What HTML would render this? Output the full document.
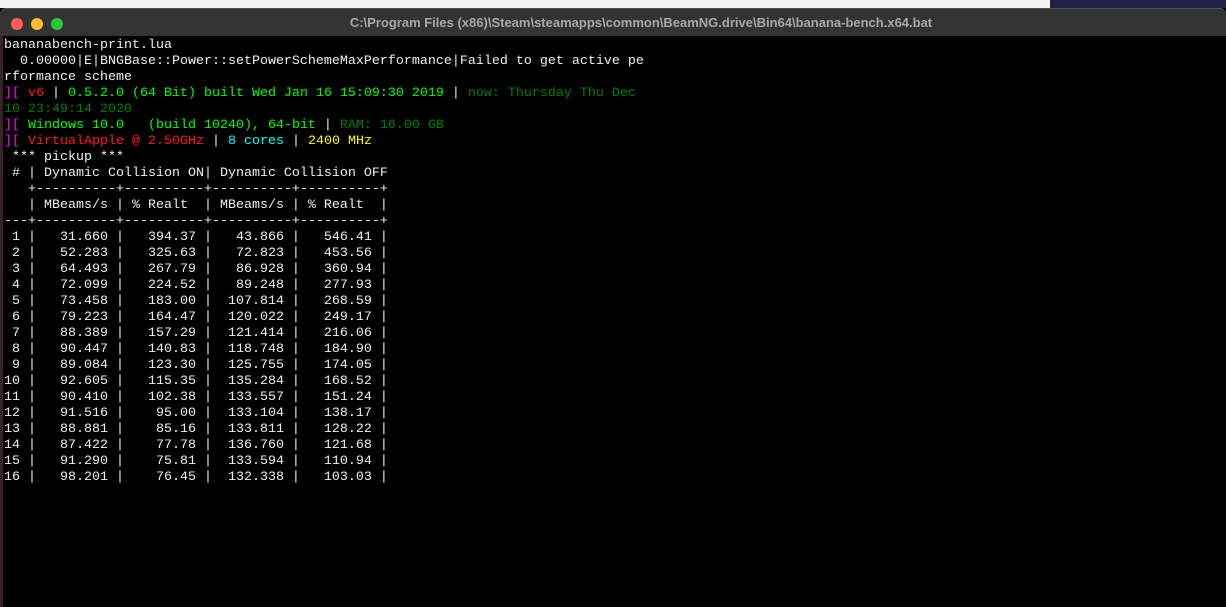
<!DOCTYPE html>
<html><head><meta charset="utf-8"><style>
html,body{margin:0;padding:0;width:1226px;height:607px;overflow:hidden;background:#000}
#top{position:absolute;left:0;top:0;width:1226px;height:8px;background:#f2f2f2}
#top .nav{position:absolute;left:1050px;top:0;width:176px;height:8px;background:#1e2049}
#bar{position:absolute;left:0;top:8px;width:1226px;height:28px;background:#333;border-top:1px solid #555;box-sizing:border-box;border-radius:6px 6px 0 0}
.dot{position:absolute;top:9px;width:12px;height:12px;border-radius:50%}
#title{position:absolute;left:0;right:0;top:6px;text-align:center;padding-left:56px;font:bold 13px "Liberation Sans",sans-serif;color:#a8a8a8}
#lb{position:absolute;left:0;top:36px;width:3px;height:571px;background:#3a2226}
pre{position:absolute;left:4px;top:38px;margin:0;font:13.33px/16px "Liberation Mono",monospace;color:#f0f0f0;white-space:pre}
.m{color:#ff00ff}.r{color:#ff1a1a}.g{color:#00ff00}.d{color:#008000}.c{color:#00ffff}.y{color:#ffff00}
</style></head><body>
<div id="top"><div class="nav"></div></div>
<div id="bar">
<div class="dot" style="left:11px;background:#fe5f57"></div>
<div class="dot" style="left:31px;background:#febc2e"></div>
<div class="dot" style="left:51px;background:#28c840"></div>
<div id="title">C:\Program Files (x86)\Steam\steamapps\common\BeamNG.drive\Bin64\banana-bench.x64.bat</div>
</div>
<div id="lb"></div>
<pre>bananabench-print.lua
  0.00000|E|BNGBase::Power::setPowerSchemeMaxPerformance|Failed to get active pe
rformance scheme
<span class="m">][</span> <span class="r">v6</span> | <span class="g">0.5.2.0 (64 Bit) built Wed Jan 16 15:09:30 2019</span> | <span class="d">now: Thursday Thu Dec</span>
<span class="d">10 23:49:14 2020</span>
<span class="m">][</span> <span class="g">Windows 10.0   (build 10240), 64-bit</span> | <span class="d">RAM: 16.00 GB</span>
<span class="m">][</span> <span class="r">VirtualApple @ 2.50GHz</span> | <span class="c">8 cores</span> | <span class="y">2400 MHz</span>
 *** pickup ***
 # | Dynamic Collision ON| Dynamic Collision OFF
   +----------+----------+----------+----------+
   | MBeams/s | % Realt  | MBeams/s | % Realt  |
---+----------+----------+----------+----------+
 1 |   31.660 |   394.37 |   43.866 |   546.41 |
 2 |   52.283 |   325.63 |   72.823 |   453.56 |
 3 |   64.493 |   267.79 |   86.928 |   360.94 |
 4 |   72.099 |   224.52 |   89.248 |   277.93 |
 5 |   73.458 |   183.00 |  107.814 |   268.59 |
 6 |   79.223 |   164.47 |  120.022 |   249.17 |
 7 |   88.389 |   157.29 |  121.414 |   216.06 |
 8 |   90.447 |   140.83 |  118.748 |   184.90 |
 9 |   89.084 |   123.30 |  125.755 |   174.05 |
10 |   92.605 |   115.35 |  135.284 |   168.52 |
11 |   90.410 |   102.38 |  133.557 |   151.24 |
12 |   91.516 |    95.00 |  133.104 |   138.17 |
13 |   88.881 |    85.16 |  133.811 |   128.22 |
14 |   87.422 |    77.78 |  136.760 |   121.68 |
15 |   91.290 |    75.81 |  133.594 |   110.94 |
16 |   98.201 |    76.45 |  132.338 |   103.03 |</pre>
</body></html>
